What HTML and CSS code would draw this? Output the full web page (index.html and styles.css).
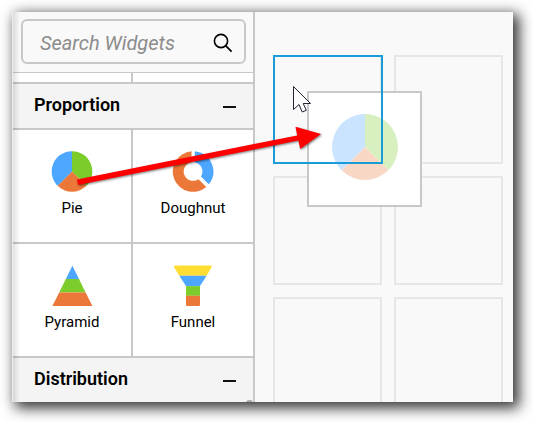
FILE: index.html
```html
<!DOCTYPE html>
<html lang="en">
<head>
<meta charset="utf-8">
<title>Widgets</title>
<link rel="stylesheet" href="styles.css">
</head>
<body>
<main class="window">
  <aside class="sidebar">
    <div class="search-area">
      <div class="search">
        <span class="search-text">Search Widgets</span>
        <svg class="search-icon" width="20" height="20" viewBox="0 0 20 20"><circle cx="8" cy="8" r="6.6"/><path d="M12.6 12.6 18.6 18.6"/></svg>
      </div>
    </div>
    <div class="row row-cut"><div class="cell"></div><div class="cell"></div></div>
    <header class="section"><span>Proportion</span><i class="minus"></i></header>
    <div class="row">
      <div class="cell">
        <svg width="42" height="42" viewBox="-21 -20.5 42 42"><path fill="#7ccc2b" d="M0 0V-20.3A20.3 20.3 0 0 1 14.35 14.35Z"/><path fill="#eb7838" d="M0 0 14.35 14.35A20.3 20.3 0 0 1-14.35 14.35Z"/><path fill="#4da6ff" d="M0 0-14.35 14.35A20.3 20.3 0 0 1 0-20.3Z"/></svg>
        <span>Pie</span>
      </div>
      <div class="cell">
        <svg width="42" height="42" viewBox="-21 -20.5 42 42"><path fill="#4da6ff" d="M1.8-20.2A20.3 20.3 0 0 1 15.8 12.8L8 5A9.4 9.4 0 0 0 1.8-9.2Z"/><path fill="#eb7838" d="M-1.5-20.2V-9.3A9.4 9.4 0 1 0 5.4 7.7L13.2 15.5A20.3 20.3 0 1 1-1.5-20.2Z"/></svg>
        <span>Doughnut</span>
      </div>
    </div>
    <div class="row">
      <div class="cell">
        <svg width="42" height="42" viewBox="-0.4 0.2 42 42"><path fill="#4da6ff" d="M21 1 27.6 14.3H14.4Z"/><path fill="#7ccc2b" d="M14.4 14.3H27.6L34.2 27.6H7.8Z"/><path fill="#eb7838" d="M7.8 27.6H34.2L41 41.2H1Z"/></svg>
        <span>Pyramid</span>
      </div>
      <div class="cell">
        <svg width="42" height="42" viewBox="0.2 0.2 42 42"><path fill="#ffdd33" d="M3 .7H39Q40.5.7 39.8 2.2L34.8 11H7.5L2.2 2.2Q1.5.7 3 .7Z"/><path fill="#4da6ff" d="M7.5 11H34.8L28.2 21.3H14.2Z"/><path fill="#7ccc2b" d="M14.2 21.3H28.2V31H14.2Z"/><path fill="#eb7838" d="M14.2 31H28.2V40Q28.2 41.2 27 41.2H15.4Q14.2 41.2 14.2 40Z"/></svg>
        <span>Funnel</span>
      </div>
    </div>
    <header class="section"><span>Distribution</span><i class="minus"></i></header>
    <i class="thumb"></i>
  </aside>
  <section class="canvas">
    <div class="slot"></div><div class="slot"></div>
    <div class="slot"></div><div class="slot"></div>
    <div class="slot"></div><div class="slot"></div>
  </section>
</main>
<div class="ghost">
  <svg width="68" height="68" viewBox="-34 -34 68 68"><path fill="#d8f0c0" d="M0 0V-33A33 33 0 0 1 23.3 23.3Z"/><path fill="#f9d7c5" d="M0 0 23.3 23.3A33 33 0 0 1-23.3 23.3Z"/><path fill="#cae4ff" d="M0 0-23.3 23.3A33 33 0 0 1 0-33Z"/></svg>
</div>
<div class="target"></div>
<svg class="overlay" width="533" height="422" viewBox="0 0 533 422">
  <path class="cursor" d="M293.5 86.5V109.5L299 104.5 302.2 112 306.3 110.3 303.2 103.5H310.5Z"/>
  <path class="arrow" d="M77 179.5 297.2 135.4 295.5 126.7 321 134 300.2 149 298.4 140.6 78 185Z"/>
</svg>
</body>
</html>
```

FILE: styles.css
```css
* { box-sizing: border-box; }
body {
  margin: 0;
  width: 533px;
  height: 422px;
  padding: 12px 20px 20px 13px;
  overflow: hidden;
  background: #fff;
  color: #000;
  font-family: Roboto, sans-serif;
}
.window {
  display: flex;
  width: 500px;
  height: 390px;
  background: #f9f9f9;
  box-shadow: -1px 0 0 #eee, 4px 4px 13px 2px rgba(0, 0, 0, .8);
}
.sidebar {
  position: relative;
  width: 242px;
  height: 390px;
  overflow: hidden;
  border-right: 2px solid #c8c8c8;
}
.sidebar::after {
  content: "";
  position: absolute;
  inset: 0 auto 0 0;
  width: 7px;
  background: linear-gradient(90deg, rgba(0, 0, 0, .12), transparent);
}
.search-area {
  height: 61px;
  padding: 7px 7px 0 8px;
  border-bottom: 1px solid #c8c8c8;
}
.search {
  display: flex;
  align-items: center;
  justify-content: space-between;
  height: 45px;
  padding: 2px 11px 0 17px;
  border: 2px solid #c8c8c8;
  border-radius: 6px;
}
.search-text {
  color: #8c8c8c;
  font-size: 20px;
  font-style: italic;
  line-height: 24px;
  white-space: nowrap;
}
.search-icon { fill: none; stroke: #000; stroke-width: 1.6; }
.row {
  display: grid;
  grid-template-columns: 120px 120px;
  height: 114px;
  border-bottom: 2px solid #c8c8c8;
}
.row-cut { height: 11px; }
.cell {
  display: flex;
  flex-direction: column;
  align-items: center;
  padding-top: 21px;
  background: #fff;
  font-size: 15px;
  line-height: 18px;
}
.row-cut .cell { padding: 0; }
.cell:first-child { border-right: 2px solid #c8c8c8; }
.cell svg { display: block; margin-bottom: 6px; }
.section {
  display: flex;
  align-items: center;
  justify-content: space-between;
  height: 46px;
  padding: 0 17px 2px 21px;
  border-bottom: 2px solid #c8c8c8;
  background: #f4f4f4;
  font-size: 18px;
  font-weight: 600;
}
.section span { padding-bottom: 2px; }
.minus { width: 13px; height: 2px; margin-top: 3px; background: #111; }
.thumb {
  position: absolute;
  right: 0;
  bottom: -4px;
  width: 7px;
  height: 6px;
  border-radius: 3px;
  background: #aaa;
}
.canvas {
  display: grid;
  grid-template-columns: 109px 109px;
  grid-auto-rows: 109px;
  gap: 12px;
  width: 258px;
  height: 390px;
  padding: 43px 0 0 18px;
  overflow: hidden;
}
.slot { border: 2px solid #e6e6e6; }
.ghost {
  position: absolute;
  left: 307px;
  top: 91px;
  display: grid;
  place-items: center;
  width: 115px;
  height: 116px;
  padding-bottom: 4px;
  border: 2px solid #c8c8c8;
  background: #fff;
}
.target {
  position: absolute;
  left: 273px;
  top: 55px;
  width: 110px;
  height: 109px;
  border: 2px solid #1a9cd8;
}
.overlay { position: absolute; inset: 0; }
.cursor { fill: #fff; stroke: #223; stroke-width: 1; }
.arrow { fill: #f00; filter: drop-shadow(1px 1px 1px rgba(0, 0, 0, .5)); }
```
